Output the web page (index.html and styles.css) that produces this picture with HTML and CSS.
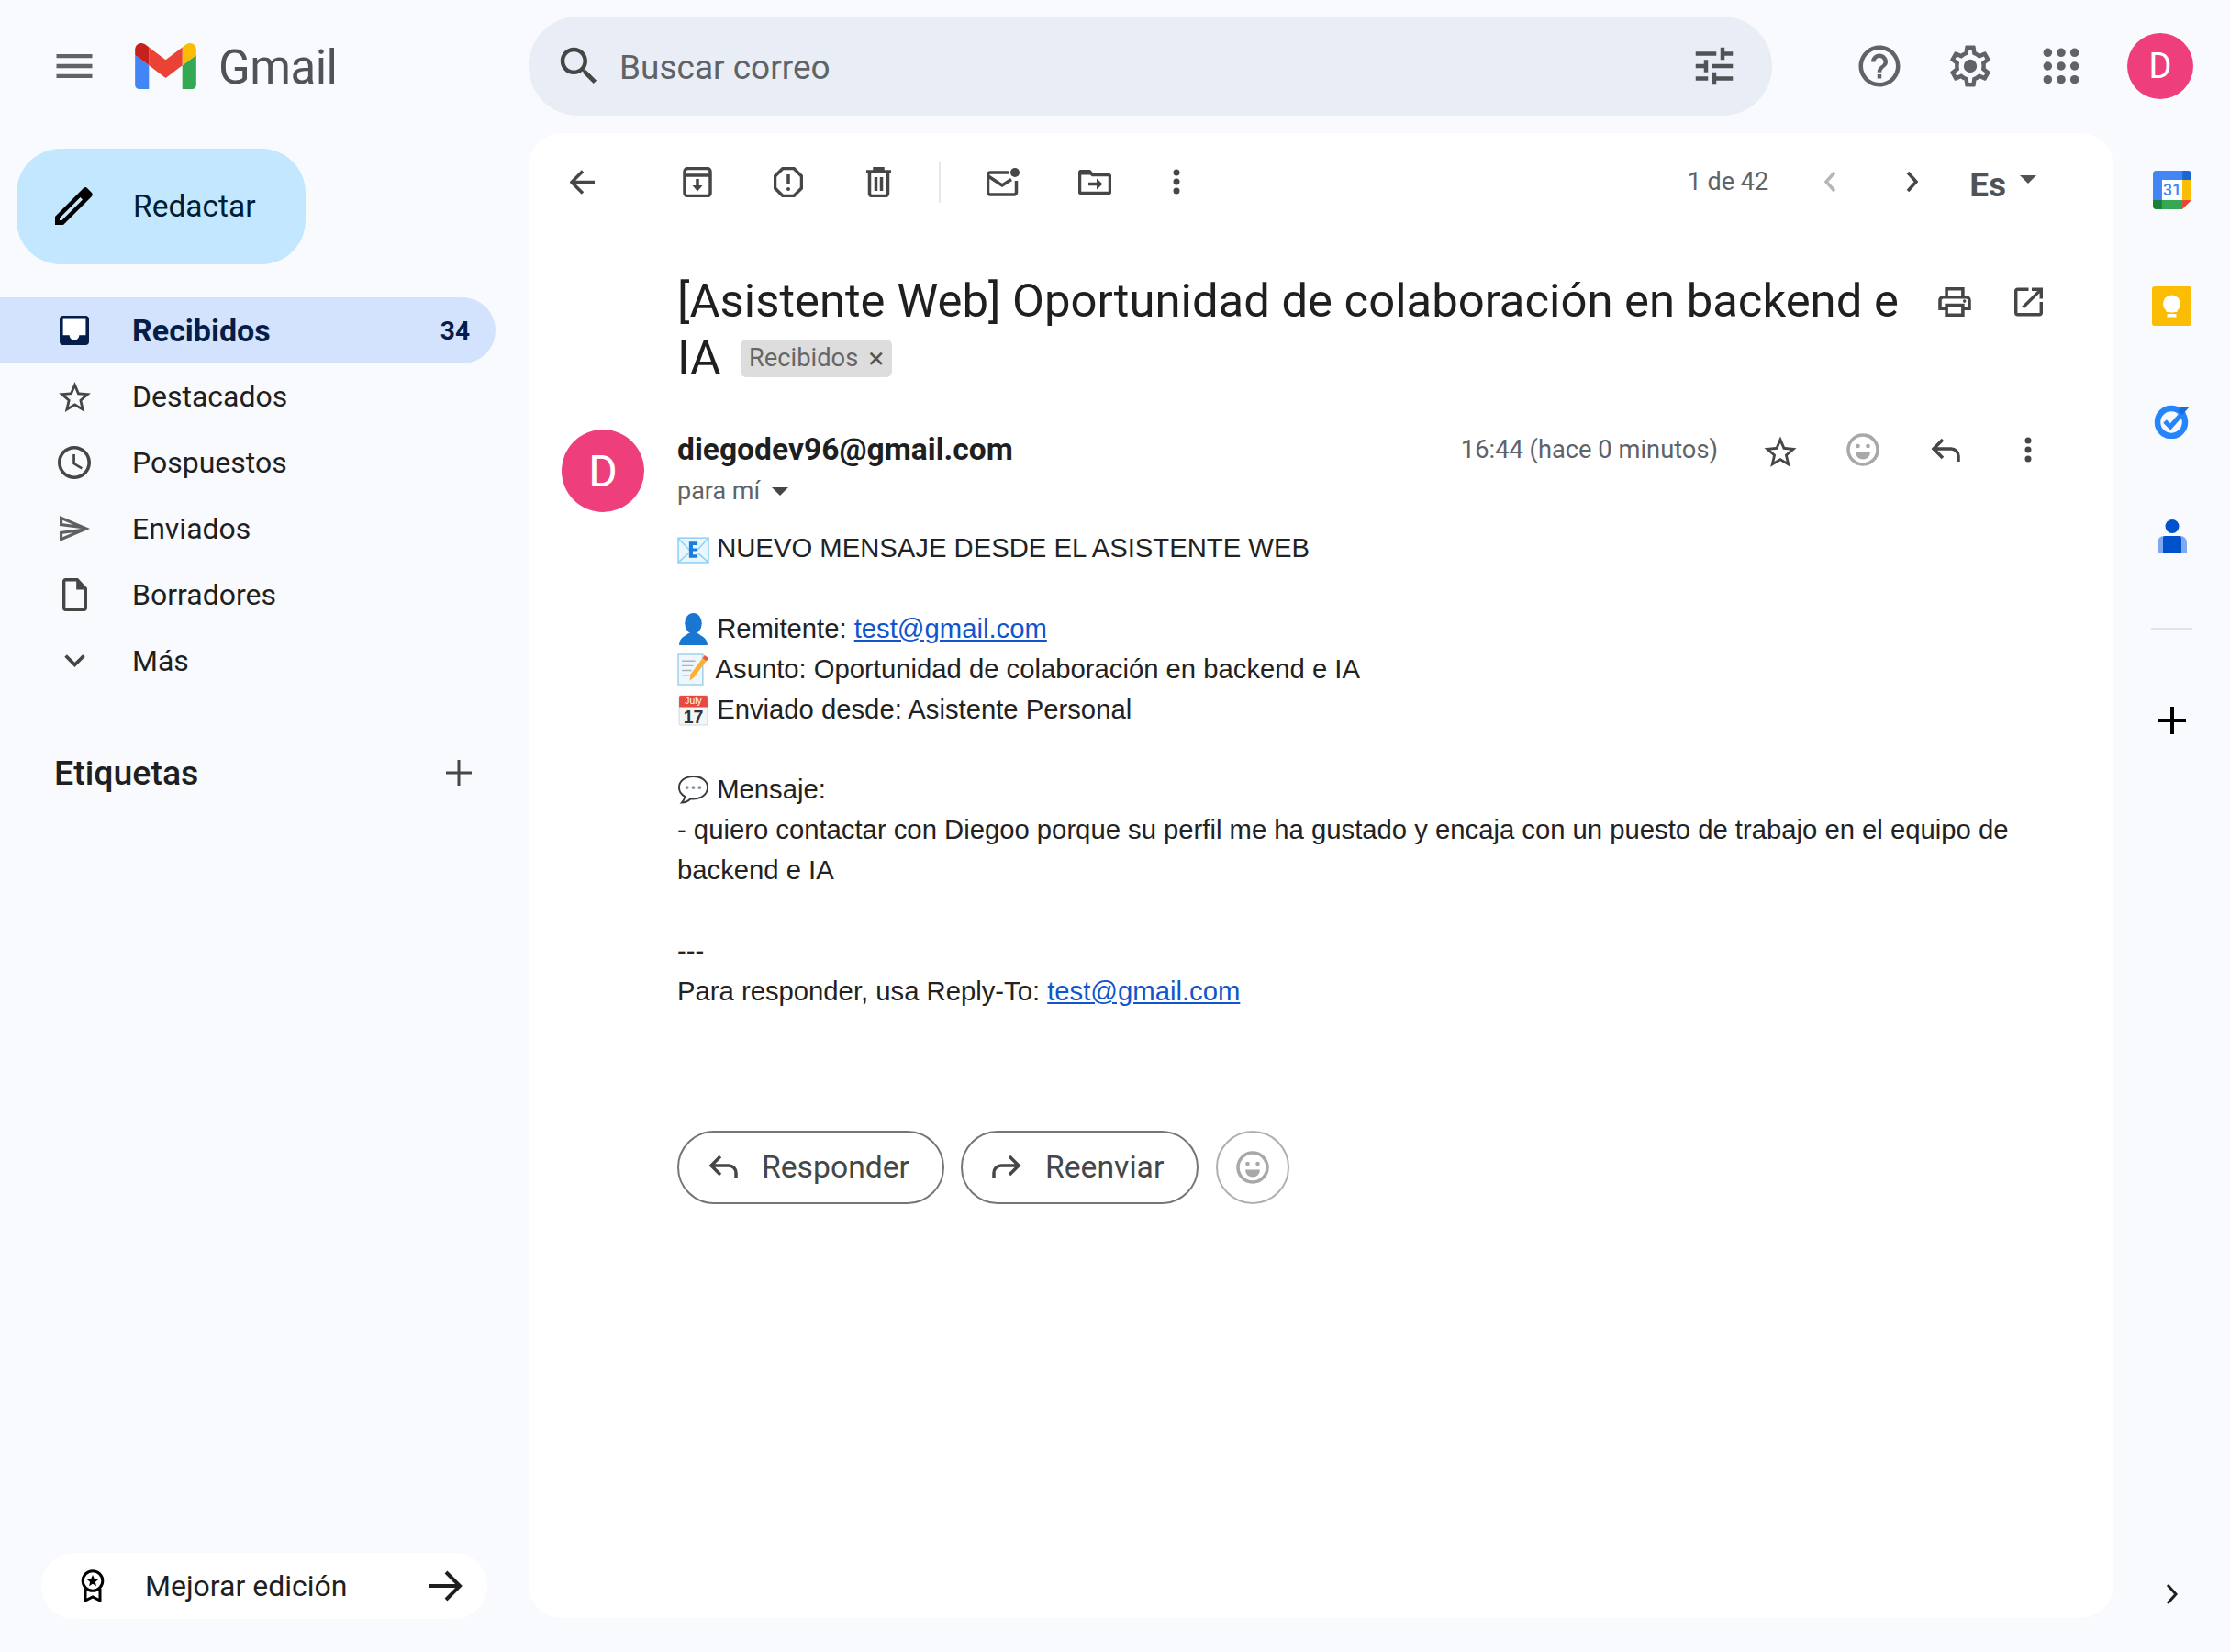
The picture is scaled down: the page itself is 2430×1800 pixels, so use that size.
FILE: index.html
```html
<!DOCTYPE html>
<html lang="es">
<head>
  <meta charset="UTF-8" />
  <meta name="viewport" content="width=device-width, initial-scale=1.0" />
  <title>Gmail</title>
  <link rel="stylesheet" href="styles.css">
</head>
<body>
  <header class="topbar">
    <div class="brand">
      <svg class="menu-icon" viewBox="3 6 18 12"><path d="M3 18h18v-2H3v2zm0-5h18v-2H3v2zm0-7v2h18V6H3z"/></svg>
      <svg class="logo" viewBox="52 42 88 66">
        <path fill="#4285f4" d="M58 108h14V74L52 59v43c0 3.32 2.69 6 6 6"/>
        <path fill="#34a853" d="M120 108h14c3.32 0 6-2.69 6-6V59l-20 15"/>
        <path fill="#fbbc04" d="M120 48v26l20-15v-8c0-7.42-8.47-11.65-14.4-7.2"/>
        <path fill="#ea4335" d="M72 74V48l24 18 24-18v26L96 92"/>
        <path fill="#c5221f" d="M52 51v8l20 15V48l-5.6-4.2c-5.94-4.45-14.4-.22-14.4 7.2"/>
      </svg>
      <span class="logo-text">Gmail</span>
    </div>
    <div class="search">
      <svg class="search-icon" viewBox="0 0 24 24"><path d="M15.5 14h-.79l-.28-.27C15.41 12.59 16 11.11 16 9.5 16 5.91 13.09 3 9.5 3S3 5.91 3 9.5 5.91 16 9.5 16c1.61 0 3.09-.59 4.23-1.57l.27.28v.79l5 4.99L20.49 19l-4.99-5zm-6 0C7.01 14 5 11.99 5 9.5S7.01 5 9.5 5 14 7.01 14 9.5 11.99 14 9.5 14z"/></svg>
      <span class="search-text">Buscar correo</span>
      <svg class="tune-icon" viewBox="0 0 24 24"><path d="M3 17v2h6v-2H3zM3 5v2h10V5H3zm10 16v-2h8v-2h-8v-2h-2v6h2zM7 9v2H3v2h4v2h2V9H7zm14 4v-2H11v2h10zm-6-4h2V7h4V5h-4V3h-2v6z"/></svg>
    </div>
    <div class="top-actions">
      <svg class="top-icon" viewBox="0 0 24 24"><path d="M11 18h2v-2h-2v2zm1-16C6.48 2 2 6.48 2 12s4.48 10 10 10 10-4.48 10-10S17.52 2 12 2zm0 18c-4.41 0-8-3.59-8-8s3.59-8 8-8 8 3.59 8 8-3.59 8-8 8zm0-14c-2.21 0-4 1.79-4 4h2c0-1.1.9-2 2-2s2 .9 2 2c0 2-3 1.75-3 5h2c0-2.25 3-2.5 3-5 0-2.21-1.79-4-4-4z"/></svg>
      <svg class="top-icon" viewBox="0 0 24 24"><path d="M19.43 12.98c.04-.32.07-.64.07-.98 0-.34-.03-.66-.07-.98l2.11-1.65c.19-.15.24-.42.12-.64l-2-3.46c-.09-.16-.26-.25-.44-.25-.06 0-.12.01-.17.03l-2.49 1c-.52-.4-1.08-.73-1.69-.98l-.38-2.65C14.46 2.18 14.25 2 14 2h-4c-.25 0-.46.18-.49.42l-.38 2.65c-.61.25-1.17.59-1.69.98l-2.49-1c-.06-.02-.12-.03-.18-.03-.17 0-.34.09-.43.25l-2 3.46c-.13.22-.07.49.12.64l2.11 1.65c-.04.32-.07.65-.07.98 0 .33.03.66.07.98l-2.11 1.65c-.19.15-.24.42-.12.64l2 3.46c.09.16.26.25.44.25.06 0 .12-.01.17-.03l2.49-1c.52.4 1.08.73 1.69.98l.38 2.65c.03.24.24.42.49.42h4c.25 0 .46-.18.49-.42l.38-2.65c.61-.25 1.17-.59 1.69-.98l2.49 1c.06.02.12.03.18.03.17 0 .34-.09.43-.25l2-3.46c.12-.22.07-.49-.12-.64l-2.11-1.65zm-1.98-1.71c.04.31.05.52.05.73 0 .21-.02.43-.05.73l-.14 1.13.89.7 1.08.84-.7 1.21-1.27-.51-1.04-.42-.9.68c-.43.32-.84.56-1.25.73l-1.06.43-.16 1.13-.2 1.35h-1.4l-.19-1.35-.16-1.13-1.06-.43c-.43-.18-.83-.41-1.23-.71l-.91-.7-1.06.43-1.27.51-.7-1.21 1.08-.84.89-.7-.14-1.13c-.03-.31-.05-.54-.05-.74s.02-.43.05-.73l.14-1.13-.89-.7-1.08-.84.7-1.21 1.27.51 1.04.42.9-.68c.43-.32.84-.56 1.25-.73l1.06-.43.16-1.13.2-1.35h1.39l.19 1.35.16 1.13 1.06.43c.43.18.83.41 1.23.71l.91.7 1.06-.43 1.27-.51.7 1.21-1.07.85-.89.7.14 1.13z"/><circle cx="12" cy="12" r="3.2"/></svg>
      <svg class="top-icon top-grid" viewBox="0 0 24 24"><circle cx="4" cy="4" r="2.600"/><circle cx="12" cy="4" r="2.600"/><circle cx="20" cy="4" r="2.600"/><circle cx="4" cy="12" r="2.600"/><circle cx="12" cy="12" r="2.600"/><circle cx="20" cy="12" r="2.600"/><circle cx="4" cy="20" r="2.600"/><circle cx="12" cy="20" r="2.600"/><circle cx="20" cy="20" r="2.600"/></svg>
      <div class="avatar avatar-top">D</div>
    </div>
  </header>

  <div class="workspace">
    <aside class="sidebar">
      <button class="compose">
        <svg class="compose-icon" viewBox="0 0 42 42"><path fill-rule="evenodd" d="M0 42v-9L31 2a3 3 0 0 1 4 0l5 5a3 3 0 0 1 0 4L9 42zM5 34.500V37h2.500L30 14.500l-2.500-2.500z"/></svg>
        Redactar
      </button>
      <nav class="nav">
        <a class="nav-item active">
          <span class="nav-slot"><svg class="nav-icon inbox" viewBox="3 3 18 18"><path fill="#fff" d="M5 5h14v10h-4c0 1.66-1.34 3-3 3s-3-1.34-3-3H5z"/><path d="M19 3H5c-1.1 0-2 .9-2 2v14c0 1.1.9 2 2 2h14c1.1 0 2-.9 2-2V5c0-1.1-.9-2-2-2zm0 12h-4c0 1.66-1.34 3-3 3s-3-1.34-3-3H5V5h14v10z"/></svg></span>
          <span>Recibidos</span><span class="count">34</span>
        </a>
        <a class="nav-item">
          <span class="nav-slot"><svg class="nav-icon star" viewBox="2 2 20 19"><path d="M22 9.24l-7.19-.62L12 2 9.19 8.63 2 9.24l5.46 4.73L5.82 21 12 17.27 18.18 21l-1.63-7.03L22 9.24zM12 15.4l-3.76 2.27 1-4.28-3.32-2.88 4.38-.38L12 6.1l1.71 4.04 4.38.38-3.32 2.88 1 4.28L12 15.4z"/></svg></span>
          <span>Destacados</span>
        </a>
        <a class="nav-item">
          <span class="nav-slot"><svg class="nav-icon clock" viewBox="2 2 20 20"><path d="M11.99 2C6.47 2 2 6.48 2 12s4.47 10 9.99 10C17.52 22 22 17.52 22 12S17.52 2 11.99 2zM12 20c-4.42 0-8-3.58-8-8s3.58-8 8-8 8 3.58 8 8-3.58 8-8 8zm.5-13H11v6l5.25 3.15.75-1.23-4.5-2.67z"/></svg></span>
          <span>Pospuestos</span>
        </a>
        <a class="nav-item">
          <span class="nav-slot"><svg class="nav-icon send" viewBox="2 3 21 18" preserveAspectRatio="none"><path d="M4.01 6.03l7.51 3.22-7.52-1 .01-2.22m7.5 8.72L4 17.97v-2.22l7.51-1M2.01 3L2 10l15 2-15 2 .01 7L23 12 2.01 3z"/></svg></span>
          <span>Enviados</span>
        </a>
        <a class="nav-item">
          <span class="nav-slot"><svg class="nav-icon draft" viewBox="4 2 16 20" preserveAspectRatio="none"><path d="M14 2H6c-1.1 0-2 .9-2 2v16c0 1.1.9 2 2 2h12c1.1 0 2-.9 2-2V8l-6-6zm4 18H6V4h7v5h5v11z"/></svg></span>
          <span>Borradores</span>
        </a>
        <a class="nav-item">
          <span class="nav-slot"><svg class="nav-icon more" viewBox="6 8.500 12 7.500"><path d="M16.59 8.59L12 13.17 7.41 8.59 6 10l6 6 6-6z"/></svg></span>
          <span>Más</span>
        </a>
      </nav>
      <div class="labels-head">
        <span>Etiquetas</span>
        <svg class="labels-add" viewBox="0 0 28 28"><path d="M14 0v28M0 14h28"/></svg>
      </div>
      <div class="promo">
        <svg class="promo-icon" viewBox="0 0 26 36"><circle cx="13" cy="12.500" r="10.800"/><path d="M5 21v13l8-4 8 4V21"/><path class="solid" d="M13 6l1.800 4.300 4.600.4-3.500 3 1 4.500-3.900-2.400-3.900 2.400 1-4.500-3.500-3 4.600-.4z"/></svg>
        <span class="promo-text">Mejorar edición</span>
        <svg class="promo-arrow" viewBox="0 0 36 36"><path d="M0 18h33M18 3l15 15-15 15"/></svg>
      </div>
    </aside>

    <main class="mail">
      <div class="toolbar">
        <div class="tool tool-back"><svg class="ico" width="27" height="27" viewBox="0 0 27 27"><path d="M27 13.500H2M14 1.500L2 13.500l12 12"/></svg></div>
        <div class="tool tool-first"><svg class="ico" width="32" height="33" viewBox="0 0 32 33"><path d="M2 9v19.500A3 3 0 0 0 5 31.500h22a3 3 0 0 0 3-3V9M2 9V5a3.500 3.500 0 0 1 3.500-3.500h21A3.500 3.500 0 0 1 30 5v4zM16 13v11"/><path class="solid" d="M10.500 20h11L16 26.500z"/></svg></div>
        <div class="tool"><svg class="ico" width="32" height="33" viewBox="0 0 32 33"><path d="M10 1.500h12L30.500 10v13L22 31.500H10L1.500 23V10zM16 8v11"/><circle class="solid" cx="16" cy="24" r="2"/></svg></div>
        <div class="tool"><svg class="ico" width="27" height="33" viewBox="0 0 27 33"><path d="M3.500 6v23a2.500 2.500 0 0 0 2.500 2.500h15a2.500 2.500 0 0 0 2.500-2.500V6M0 5h27M9 4V1.500h9V4M10.500 11v15M16.500 11v15"/></svg></div>
        <div class="tool-divider"></div>
        <div class="tool"><svg class="ico" width="37" height="31" viewBox="0 0 37 31"><path d="M24 5H4a2.500 2.500 0 0 0-2.500 2.500v19A2.500 2.500 0 0 0 4 29h26a2.500 2.500 0 0 0 2.500-2.500V14M2 9l15 10 10-6.500"/><circle class="solid" cx="31" cy="5" r="5"/></svg></div>
        <div class="tool"><svg class="ico" width="36" height="27" viewBox="0 0 36 27"><path d="M1.500 3.500A2 2 0 0 1 3.500 1.500H12l3.500 4H32.500A2 2 0 0 1 34.500 7.500v16a2 2 0 0 1-2 2H3.500a2 2 0 0 1-2-2zM11 15.500h12"/><path class="solid" d="M1.500 3.500A2 2 0 0 1 3.500 1.500H12l3.500 4H1.500z"/><path class="solid" d="M20 9.500l6.500 6-6.500 6z"/></svg></div>
        <div class="tool tool-dots"><svg class="ico-solid" width="8" height="28" viewBox="0 0 8 28"><circle cx="4" cy="4" r="3.500"/><circle cx="4" cy="14" r="3.500"/><circle cx="4" cy="24" r="3.500"/></svg></div>
        <div class="pager">
          <span class="pager-text">1 de 42</span>
          <svg class="chev chev-prev" width="14" height="24" viewBox="0 0 14 24"><path d="M12 2L3 12l9 10"/></svg>
          <svg class="chev chev-next" width="14" height="24" viewBox="0 0 14 24"><path d="M2 2l9 10-9 10"/></svg>
          <span class="lang">Es</span>
          <span class="lang-caret"></span>
        </div>
      </div>

      <div class="subject-row">
        <h1 class="subject"><span>[Asistente Web] Oportunidad de colaboración en backend e</span> <span>IA</span> <span class="chip"><span>Recibidos</span><span class="chip-x">×</span></span></h1>
        <svg class="subject-icon print" viewBox="2 3 20 18"><path d="M19 8h-1V3H6v5H5c-1.660 0-3 1.340-3 3v6h4v4h12v-4h4v-6c0-1.660-1.340-3-3-3zM8 5h8v3H8V5zm8 12v2H8v-4h8v2zm2-2v-2H6v2H4v-4c0-.55.45-1 1-1h14c.55 0 1 .45 1 1v4h-2z"/><circle cx="18" cy="11.500" r="1"/></svg>
        <svg class="subject-icon open" viewBox="3 3 18 18"><path d="M19 19H5V5h7V3H5c-1.110 0-2 .9-2 2v14c0 1.100.89 2 2 2h14c1.100 0 2-.9 2-2v-7h-2v7zM14 3v2h3.590l-9.830 9.830 1.410 1.410L19 6.410V10h2V3h-7z"/></svg>
      </div>

      <article class="message">
        <div class="avatar avatar-msg">D</div>
        <div class="message-main">
          <div class="message-head">
            <div>
              <div class="sender">diegodev96@gmail.com</div>
              <div class="to">para mí<span class="to-caret"></span></div>
            </div>
            <div class="message-meta">
              <span class="time">16:44 (hace 0 minutos)</span>
              <div class="meta-btn"><svg class="meta-star" viewBox="0 0 24 24"><path d="M22 9.240l-7.190-.62L12 2 9.190 8.630 2 9.240l5.460 4.730L5.820 21 12 17.270 18.180 21l-1.630-7.030L22 9.240zM12 15.400l-3.760 2.270 1-4.280-3.320-2.880 4.380-.38L12 6.100l1.710 4.040 4.380.38-3.320 2.880 1 4.280L12 15.400z"/></svg></div>
              <div class="meta-btn"><svg class="smile smile-light" width="36" height="36" viewBox="0 0 36 36"><circle cx="18" cy="18" r="16"/><circle class="solid" cx="12.500" cy="14" r="2.300"/><circle class="solid" cx="23.500" cy="14" r="2.300"/><path class="solid" d="M10 20.500h16a8 8 0 0 1-16 0z"/></svg></div>
              <div class="meta-btn"><svg class="ico" width="32" height="27" viewBox="0 0 32 27"><path d="M13 2L3 12l10 10M3 12h19a8 8 0 0 1 8 8v6"/></svg></div>
              <div class="meta-btn"><svg class="ico-solid" width="8" height="28" viewBox="0 0 8 28"><circle cx="4" cy="4" r="3.500"/><circle cx="4" cy="14" r="3.500"/><circle cx="4" cy="24" r="3.500"/></svg></div>
            </div>
          </div>

          <div class="message-body">
            <svg class="emoji" viewBox="0 0 34 34"><rect x="1" y="6" width="32" height="26" fill="#eaf6fd" stroke="#8ed2f5" stroke-width="1.500"/><path d="M1 6l12 13M33 6L21 19M1 32l11-10M33 32L22 22" stroke="#8ed2f5" stroke-width="1.500" fill="none"/><path d="M12.500 10h9v3.500H16.500v3.500H21v3H16.500v3.500h5v3.500h-9z" fill="#1a7de0"/></svg> NUEVO MENSAJE DESDE EL ASISTENTE WEB<br>
            <br>
            <svg class="emoji" viewBox="0 0 34 34"><ellipse cx="17" cy="11" rx="9" ry="11" fill="#1976d2"/><path d="M2 34c0-8 7-10 11-13h8c4 3 11 5 11 13z" fill="#1976d2"/></svg> Remitente: <a href="#">test@gmail.com</a><br>
            <svg class="emoji" viewBox="0 0 34 34"><path d="M1 1h26v32H1z" fill="#eef7fd" stroke="#9dd3ee" stroke-width="1.500"/><path d="M5 8h14M5 13h12M5 18h10M5 23h8" stroke="#a9b4bd" stroke-width="1.400"/><path d="M29 2l4 3-15 20-5 4 1-7z" fill="#fbb034"/><path d="M29 2l4 3-2 3-4-3z" fill="#e5584f"/></svg> Asunto: Oportunidad de colaboración en backend e IA<br>
            <svg class="emoji" viewBox="0 0 34 34"><rect x="2" y="2" width="30" height="31" rx="1.500" fill="#f4f5f6" stroke="#d4d8dc"/><path d="M2 3.500A1.500 1.500 0 0 1 3.500 2h27A1.500 1.500 0 0 1 32 3.500V14H2z" fill="#e84a3f"/><text x="17" y="31" class="emoji-date">17</text><text x="17" y="11" class="emoji-month">July</text></svg> Enviado desde: Asistente Personal<br>
            <br>
            <svg class="emoji" viewBox="0 0 36 34"><path d="M18 2C9 2 2 7 2 14.500c0 4.500 2.500 8 6.500 10-.3 2.500-1.500 5-3.500 7 4 0 7.500-2 10-4.500 1 .2 2 .3 3 .3 9 0 16-5.300 16-12.800S27 2 18 2z" fill="#fff" stroke="#3a3d40" stroke-width="2"/><circle cx="11" cy="14.500" r="2" fill="#7f95a8"/><circle cx="18" cy="14.500" r="2" fill="#7f95a8"/><circle cx="25" cy="14.500" r="2" fill="#7f95a8"/></svg> Mensaje:<br>
            - quiero contactar con Diegoo porque su perfil me ha gustado y encaja con un puesto de trabajo en el equipo de backend e IA<br>
            <br>
            ---<br>
            Para responder, usa Reply-To: <a href="#">test@gmail.com</a>
          </div>

          <div class="reply-row">
            <button class="pill pill-reply">
              <svg class="ico" width="32" height="27" viewBox="0 0 32 27"><path d="M13 2L3 12l10 10M3 12h19a8 8 0 0 1 8 8v6"/></svg>
              Responder
            </button>
            <button class="pill pill-forward">
              <svg class="ico" width="32" height="27" viewBox="0 0 32 27"><path d="M19 2l10 10-10 10M29 12H10a8 8 0 0 0-8 8v6"/></svg>
              Reenviar
            </button>
            <button class="pill-round">
              <svg class="smile" width="36" height="36" viewBox="0 0 36 36"><circle cx="18" cy="18" r="16"/><circle class="solid" cx="12.500" cy="14" r="2.300"/><circle class="solid" cx="23.500" cy="14" r="2.300"/><path class="solid" d="M10 20.500h16a8 8 0 0 1-16 0z"/></svg>
            </button>
          </div>
        </div>
      </article>
    </main>

    <aside class="addons">
      <svg class="addon addon-cal" viewBox="0 0 200 200">
        <path fill="#fff" d="M152.600 47.400H47.400v105.300h105.300z"/>
        <path fill="#EA4335" d="M152.600 200 200 152.600h-47.400z"/>
        <path fill="#FBBC04" d="M200 47.400h-47.400v105.300H200z"/>
        <path fill="#34A853" d="M152.600 152.600H47.400V200h105.300z"/>
        <path fill="#188038" d="M0 152.600v31.600C0 192.900 7.100 200 15.800 200h31.600v-47.400z"/>
        <path fill="#1967D2" d="M200 47.400V15.800C200 7.100 192.900 0 184.200 0h-31.600v47.400z"/>
        <path fill="#4285F4" d="M152.600 0H15.800C7.100 0 0 7.100 0 15.800v136.800h47.400V47.400h105.300z"/>
        <text x="100" y="127" class="cal-date">31</text>
      </svg>
      <svg class="addon addon-keep" viewBox="0 0 43 43">
        <rect width="43" height="43" rx="3" fill="#fbbc04"/>
        <circle cx="21.500" cy="19" r="9.500" fill="#fff"/>
        <path d="M15.500 25h12v3h-12z" fill="#fff"/>
        <path d="M16.500 30h10v3.500h-10z" fill="#fff"/>
      </svg>
      <svg class="addon addon-tasks" viewBox="0 0 40 38">
        <circle cx="19" cy="20" r="15" fill="none" stroke="#2684fc" stroke-width="6.500"/>
        <path d="M12 19l6 6L33 8" fill="none" stroke="#2684fc" stroke-width="5"/>
        <path d="M30 3l9 0-8 9-5-4z" fill="#1a6fe0"/>
      </svg>
      <svg class="addon addon-people" viewBox="0 0 32 37">
        <circle cx="16" cy="7.500" r="7.500" fill="#0052cc"/>
        <path d="M7 18h18a7 7 0 0 1 7 7v12H0V25a7 7 0 0 1 7-7z" fill="#7ea8f2"/>
        <path d="M8 18h15a3 3 0 0 1 3 3v16H6V20a2 2 0 0 1 2-2z" fill="#0052cc"/>
      </svg>
      <div class="addon-divider"></div>
      <svg class="addon-add" viewBox="0 0 30 30"><path d="M15 0v30M0 15h30"/></svg>
      <svg class="addon-toggle" viewBox="0 0 14 24"><path d="M2 2l9 10-9 10"/></svg>
    </aside>
  </div>
</body>
</html>
```

FILE: styles.css
```css
* {
  box-sizing: border-box;
}
body {
  margin: 0;
  width: 2430px;
  height: 1800px;
  overflow: hidden;
  background-color: #f8fafd;
  color: #1f1f1f;
  font-family: Roboto, 'Noto Sans', sans-serif;
}
svg {
  display: block;
  flex: none;
}
button {
  font-family: inherit;
  border: none;
  padding: 0;
  background: none;
}

/* top bar */
.topbar {
  display: flex;
  align-items: center;
  height: 145px;
  padding-bottom: 1px;
}
.brand {
  display: flex;
  align-items: center;
  width: 576px;
  padding-left: 60px;
}
.menu-icon {
  width: 42px;
  height: 26px;
  fill: #5f6368;
}
.logo {
  width: 67px;
  height: 50px;
  margin-left: 45px;
}
.logo-text {
  margin: 2px 0 0 24px;
  font-size: 51px;
  color: #505356;
  letter-spacing: -0.5px;
}
.search {
  display: flex;
  align-items: center;
  width: 1355px;
  height: 108px;
  padding: 0 36px 0 28px;
  border-radius: 54px;
  background-color: #e9eef6;
}
.search-icon {
  width: 54px;
  height: 54px;
  fill: #444746;
}
.search-text {
  flex: 1;
  margin: 2px 0 0 17px;
  font-size: 37px;
  color: #5f6368;
}
.tune-icon {
  width: 54px;
  height: 54px;
  fill: #505356;
}
.top-actions {
  display: flex;
  align-items: center;
  margin-left: 90px;
}
.top-icon {
  width: 54px;
  height: 54px;
  margin-right: 45px;
  fill: #5f6368;
}
.top-grid {
  width: 44px;
  height: 44px;
  margin: 0 50px 0 5px;
}
.avatar {
  display: flex;
  align-items: center;
  justify-content: center;
  flex: none;
  border-radius: 50%;
  background-color: #ee3f7c;
  color: #fff;
}
.avatar-top {
  width: 72px;
  height: 72px;
  font-size: 38px;
}

/* layout below the bar */
.workspace {
  display: flex;
  height: 1655px;
}
.sidebar {
  display: flex;
  flex-direction: column;
  width: 576px;
  padding-top: 17px;
}
.compose {
  display: flex;
  align-items: center;
  width: 315px;
  height: 126px;
  margin-left: 18px;
  padding: 0 0 2px 42px;
  border-radius: 48px;
  background-color: #c2e7ff;
  font-size: 33.500px;
  color: #001d35;
}
.compose-icon {
  width: 42px;
  height: 42px;
  margin-right: 43px;
}
.nav {
  margin-top: 36px;
}
.nav-item {
  display: flex;
  align-items: center;
  width: 540px;
  height: 72px;
  padding: 0 28px 0 57px;
  border-radius: 0 36px 36px 0;
  font-size: 32px;
  color: #1f1f1f;
}
.nav-item.active {
  background-color: #d3e3fd;
  color: #041e49;
  font-size: 34px;
  font-weight: 700;
}
.nav-slot {
  display: flex;
  align-items: center;
  justify-content: center;
  flex: none;
  width: 48px;
  margin-right: 39px;
}
.nav-icon {
  fill: #444746;
}
.nav-item.active .nav-icon {
  fill: #041e49;
}
.inbox {
  width: 32px;
  height: 32px;
}
.star {
  width: 35px;
  height: 33px;
}
.clock {
  width: 36px;
  height: 36px;
}
.send {
  width: 33px;
  height: 28px;
  opacity: 0.85;
}
.draft {
  width: 27px;
  height: 36px;
}
.more {
  width: 23px;
  height: 14px;
}
.count {
  margin-left: auto;
  font-size: 28px;
}
.labels-head {
  display: flex;
  align-items: center;
  justify-content: space-between;
  width: 514px;
  margin-top: 64px;
  padding-left: 59px;
  font-size: 37.500px;
  font-weight: 500;
}
.labels-add {
  width: 28px;
  height: 28px;
  fill: none;
  stroke: #444746;
  stroke-width: 3;
}
.promo {
  display: flex;
  align-items: center;
  width: 486px;
  height: 72px;
  margin: auto 0 36px 45px;
  padding: 0 27px 0 43px;
  border-radius: 36px;
  background-color: #fff;
}
.promo-icon {
  width: 26px;
  height: 36px;
  fill: none;
  stroke: #000;
  stroke-width: 3;
}
.promo-icon .solid {
  fill: #000;
  stroke: none;
}
.promo-text {
  flex: 1;
  margin-left: 44px;
  font-size: 32px;
}
.promo-arrow {
  width: 36px;
  height: 36px;
  fill: none;
  stroke: #1f1f1f;
  stroke-width: 4;
}

/* mail card */
.mail {
  width: 1727px;
  height: 1618px;
  border-radius: 36px;
  background-color: #fff;
}
.toolbar {
  display: flex;
  align-items: center;
  height: 106px;
  padding: 0 84px 0 9px;
}
.tool {
  display: flex;
  align-items: center;
  justify-content: center;
  width: 99px;
  height: 54px;
}
.tool-first {
  margin-left: 26px;
}
.tool-dots {
  width: 80px;
}
.tool-divider {
  width: 2px;
  height: 45px;
  margin: 0 19px 0 16px;
  background-color: #e6e8ea;
}
.ico {
  fill: none;
  stroke: #444746;
  stroke-width: 3.500;
}
.ico .solid {
  fill: #444746;
  stroke: none;
}
.ico-solid {
  fill: #444746;
}
.pager {
  display: flex;
  align-items: center;
  margin-left: auto;
}
.pager-text {
  font-size: 27px;
  color: #5f6368;
}
.chev {
  fill: none;
  stroke-width: 3.500;
}
.chev-prev {
  margin-left: 60px;
  stroke: #b4b6b8;
}
.chev-next {
  margin-left: 76px;
  stroke: #444746;
}
.lang {
  margin: 6px 0 0 55px;
  font-size: 37px;
  font-weight: 700;
  color: #505356;
}
.lang-caret {
  width: 0;
  height: 0;
  margin: -6px 0 0 15px;
  border-style: solid;
  border-width: 9px 9px 0 9px;
  border-color: #505356 transparent transparent transparent;
}

/* subject */
.subject-row {
  display: flex;
  align-items: flex-start;
  margin-top: 46px;
  padding: 0 0 0 162px;
}
.subject {
  width: 1352px;
  height: 125px;
  margin: 0;
  font-size: 50.800px;
  line-height: 62px;
  font-weight: 400;
  color: #1f1f1f;
}
.chip {
  display: inline-flex;
  align-items: center;
  height: 41px;
  margin-left: 9px;
  padding: 0 9px;
  border-radius: 6px;
  background-color: #dddddd;
  font-size: 27.300px;
  line-height: 41px;
  color: #666;
  vertical-align: 8px;
}
.chip-x {
  margin-left: 11px;
  font-size: 32px;
  color: #555;
}
.subject-icon {
  fill: #444746;
}
.print {
  width: 36px;
  height: 32px;
  margin: 16px 0 0 22px;
}
.open {
  width: 31px;
  height: 32px;
  margin: 16px 0 0 47px;
}

/* message */
.message {
  display: flex;
  margin-top: 46px;
  padding: 0 48px 0 36px;
}
.avatar-msg {
  width: 90px;
  height: 90px;
  margin-right: 36px;
  font-size: 48px;
}
.message-main {
  flex: 1;
}
.message-head {
  display: flex;
  justify-content: space-between;
  height: 108px;
}
.sender {
  font-size: 33.600px;
  line-height: 44px;
  font-weight: 700;
  color: #1f1f1f;
}
.to {
  display: flex;
  align-items: center;
  margin-top: 3px;
  font-size: 27px;
  line-height: 40px;
  color: #5f6368;
}
.to-caret {
  width: 0;
  height: 0;
  margin-left: 13px;
  border-style: solid;
  border-width: 9px 9px 0 9px;
  border-color: #444746 transparent transparent transparent;
}
.message-meta {
  display: flex;
  align-items: flex-start;
}
.time {
  margin-right: 23px;
  font-size: 27.300px;
  line-height: 44px;
  color: #5f6368;
}
.meta-btn {
  display: flex;
  align-items: center;
  justify-content: center;
  width: 90px;
  height: 44px;
}
.meta-star {
  width: 42px;
  height: 42px;
  margin-top: 6px;
  fill: #444746;
}
.smile {
  fill: none;
  stroke: #a8a8a8;
  stroke-width: 3.500;
}
.smile .solid {
  fill: #a8a8a8;
  stroke: none;
}
.message-body {
  font-family: 'Liberation Sans', Arial, sans-serif;
  font-size: 29.250px;
  line-height: 43.900px;
  color: #222;
}
.message-body a {
  color: #1155cc;
}
.emoji {
  display: inline-block;
  width: 35px;
  height: 35px;
  vertical-align: -8px;
}
.emoji-date {
  font-family: 'Liberation Sans', sans-serif;
  font-size: 19px;
  font-weight: 700;
  fill: #333;
  text-anchor: middle;
}
.emoji-month {
  font-family: 'Liberation Sans', sans-serif;
  font-size: 10px;
  fill: #fff;
  text-anchor: middle;
}
.reply-row {
  display: flex;
  align-items: center;
  margin-top: 129px;
}
.pill {
  display: flex;
  align-items: center;
  height: 80px;
  border: 2px solid #747775;
  border-radius: 40px;
  font-size: 33.700px;
  font-weight: 400;
  color: #444746;
}
.pill .ico {
  margin-right: 26px;
}
.pill-reply {
  width: 291px;
  padding-left: 32px;
}
.pill-forward {
  width: 259px;
  margin-left: 18px;
  padding-left: 32px;
}
.pill-round {
  display: flex;
  align-items: center;
  justify-content: center;
  width: 80px;
  height: 80px;
  margin-left: 19px;
  border: 2px solid #b0b0b0;
  border-radius: 50%;
}

/* add-ons rail */
.addons {
  position: relative;
  display: flex;
  flex-direction: column;
  align-items: center;
  width: 127px;
  padding-top: 41px;
}
.addon-cal {
  width: 42px;
  height: 42px;
}
.cal-date {
  font-family: Roboto, sans-serif;
  font-size: 84px;
  font-weight: 500;
  fill: #4285f4;
  text-anchor: middle;
}
.addon-keep {
  width: 43px;
  height: 43px;
  margin-top: 84px;
}
.addon-tasks {
  width: 40px;
  height: 38px;
  margin-top: 85px;
}
.addon-people {
  width: 32px;
  height: 37px;
  margin-top: 88px;
}
.addon-divider {
  width: 45px;
  height: 2px;
  margin-top: 81px;
  background-color: #e1e3e6;
}
.addon-add {
  width: 30px;
  height: 30px;
  margin-top: 84px;
  fill: none;
  stroke: #000;
  stroke-width: 4;
}
.addon-toggle {
  position: absolute;
  left: 57px;
  bottom: 51px;
  width: 14px;
  height: 24px;
  fill: none;
  stroke: #1f1f1f;
  stroke-width: 3;
}
```
